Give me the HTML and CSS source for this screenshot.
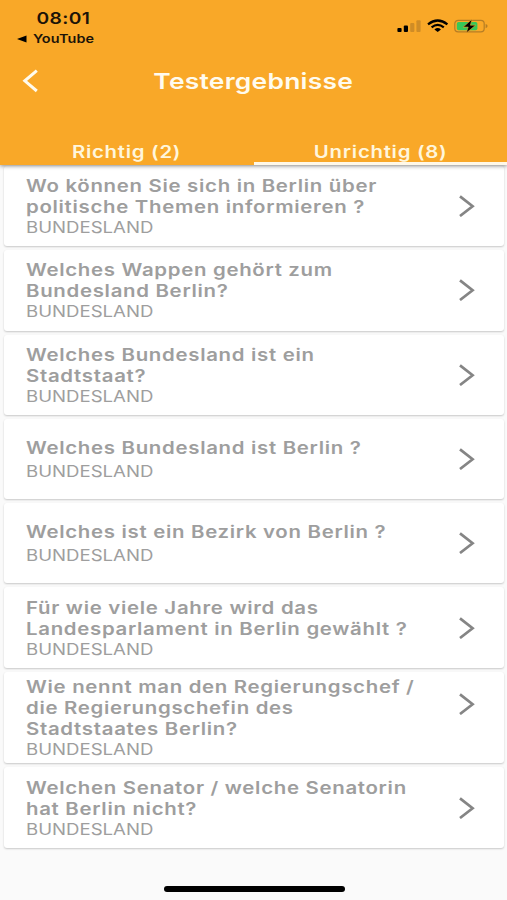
FILE: index.html
```html
<!DOCTYPE html>
<html lang="de">
<head>
<meta charset="utf-8">
<title>Testergebnisse</title>
<link rel="stylesheet" href="styles.css">
</head>
<body>
<header class="header">
	<div class="status">
		<div class="status-left">
			<div class="clock"><span class="wide">08:01</span></div>
			<div class="back-app">
				<svg width="10" height="8" viewBox="0 0 10 8"><path d="M0 4L9.5 .5v7z"/></svg>
				<span class="wide">YouTube</span>
			</div>
		</div>
		<svg class="status-icons" width="92" height="16" viewBox="0 0 92 16">
			<!-- signal -->
			<rect x="0.4" y="9.9" width="4.2" height="4.1" rx="1"/>
			<rect x="6.8" y="7.5" width="4.2" height="6.5" rx="1"/>
			<g fill="#cf8c26">
				<rect x="13.2" y="5" width="4.2" height="9" rx="1"/>
				<rect x="19.4" y="2.2" width="4.2" height="11.8" rx="1"/>
			</g>
			<!-- wifi -->
			<g fill="none" stroke="#000" stroke-width="2.2">
				<path d="M31 6.4Q40.7-1.4 50.4 6.4"/>
				<path d="M34.6 9.3Q40.7 4.4 46.8 9.3"/>
			</g>
			<path d="M37.4 11.4Q40.7 8.8 44 11.4L40.7 14z"/>
			<!-- battery -->
			<rect x="57.8" y="2.3" width="29.4" height="11.6" rx="3.4" fill="none" stroke="#b57d25" stroke-width="1.2"/>
			<path d="M88.6 6q2 .5 2 2.1t-2 2.1z" fill="#b57d25"/>
			<rect x="59.8" y="4" width="20.6" height="8.2" rx="1.8" fill="#35c759"/>
			<path d="M75 1.2L66.2 9.1h5L69.2 15L78.6 7.2h-5.2z" stroke="#f9a828" stroke-width=".6"/>
		</svg>
	</div>
	<div class="title-bar">
		<svg class="back" width="16" height="24" viewBox="0 0 16 24"><path d="M14.8 1.6L2.8 11.8L14.8 22"/></svg>
		<h1><span class="wide">Testergebnisse</span></h1>
	</div>
	<nav class="tabs">
		<a class="tab"><span class="wide">Richtig (2)</span></a>
		<a class="tab active"><span class="wide">Unrichtig (8)</span></a>
	</nav>
</header>

<main class="list">
	<div class="card">
		<div class="text">
			<h2>Wo können Sie sich in Berlin über<br>politische Themen informieren ?</h2>
			<p>BUNDESLAND</p>
		</div>
		<svg class="arrow" width="16" height="22" viewBox="0 0 16 22"><path d="M1 1.4L13.6 11.2L1 21"/></svg>
	</div>
	<div class="card">
		<div class="text">
			<h2>Welches Wappen gehört zum<br>Bundesland Berlin?</h2>
			<p>BUNDESLAND</p>
		</div>
		<svg class="arrow" width="16" height="22" viewBox="0 0 16 22"><path d="M1 1.4L13.6 11.2L1 21"/></svg>
	</div>
	<div class="card">
		<div class="text">
			<h2>Welches Bundesland ist ein<br>Stadtstaat?</h2>
			<p>BUNDESLAND</p>
		</div>
		<svg class="arrow" width="16" height="22" viewBox="0 0 16 22"><path d="M1 1.4L13.6 11.2L1 21"/></svg>
	</div>
	<div class="card single">
		<div class="text">
			<h2>Welches Bundesland ist Berlin ?</h2>
			<p>BUNDESLAND</p>
		</div>
		<svg class="arrow" width="16" height="22" viewBox="0 0 16 22"><path d="M1 1.4L13.6 11.2L1 21"/></svg>
	</div>
	<div class="card single">
		<div class="text">
			<h2>Welches ist ein Bezirk von Berlin ?</h2>
			<p>BUNDESLAND</p>
		</div>
		<svg class="arrow" width="16" height="22" viewBox="0 0 16 22"><path d="M1 1.4L13.6 11.2L1 21"/></svg>
	</div>
	<div class="card">
		<div class="text">
			<h2>Für wie viele Jahre wird das<br>Landesparlament in Berlin gewählt ?</h2>
			<p>BUNDESLAND</p>
		</div>
		<svg class="arrow" width="16" height="22" viewBox="0 0 16 22"><path d="M1 1.4L13.6 11.2L1 21"/></svg>
	</div>
	<div class="card tall">
		<div class="text">
			<h2>Wie nennt man den Regierungschef /<br>die Regierungschefin des<br>Stadtstaates Berlin?</h2>
			<p>BUNDESLAND</p>
		</div>
		<svg class="arrow" width="16" height="22" viewBox="0 0 16 22"><path d="M1 1.4L13.6 11.2L1 21"/></svg>
	</div>
	<div class="card">
		<div class="text">
			<h2>Welchen Senator / welche Senatorin<br>hat Berlin nicht?</h2>
			<p>BUNDESLAND</p>
		</div>
		<svg class="arrow" width="16" height="22" viewBox="0 0 16 22"><path d="M1 1.4L13.6 11.2L1 21"/></svg>
	</div>
</main>

<footer class="home"><div class="home-bar"></div></footer>
</body>
</html>
```
FILE: styles.css
```css
* {
	box-sizing: border-box;
}
body {
	margin: 0;
	height: 900px;
	display: flex;
	flex-direction: column;
	overflow: hidden;
	background: #fafafa;
	font-family: Inter, "Liberation Sans", sans-serif;
}
h1, h2, p {
	margin: 0;
}
svg {
	display: block;
	flex: none;
}
.wide {
	display: inline-block;
	transform: scaleX(1.2);
	white-space: nowrap;
}

/* header */
.header {
	height: 165px;
	flex: none;
	display: flex;
	flex-direction: column;
	background: #f9a828;
	box-shadow: 0 1px 4px rgba(0, 0, 0, .45);
	position: relative;
	z-index: 1;
}
.status {
	height: 54px;
	display: flex;
	justify-content: space-between;
	padding: 8px 18px 0 17px;
	color: #1c1408;
}
.clock {
	font-size: 16px;
	font-weight: 600;
	line-height: 20px;
	letter-spacing: .3px;
	padding-left: 24px;
}
.back-app {
	display: flex;
	align-items: center;
	gap: 11px;
	font-size: 12px;
	font-weight: 600;
	line-height: 21px;
	letter-spacing: .1px;
}
.status-icons {
	margin-top: 10px;
}
.title-bar {
	height: 53px;
	display: flex;
	align-items: center;
	padding-left: 22px;
}
.title-bar h1 {
	flex: 1;
	margin-right: 38px;
	text-align: center;
	font-size: 22px;
	font-weight: 600;
	line-height: 30px;
	letter-spacing: .2px;
	color: #fffbee;
}
.back path {
	fill: none;
	stroke: #fffbee;
	stroke-width: 3;
}
.tabs {
	flex: 1;
	display: flex;
}
.tab {
	flex: 1;
	display: flex;
	justify-content: center;
	align-items: flex-end;
	border-bottom: 3px solid transparent;
	font-size: 17px;
	font-weight: 600;
	line-height: 20px;
	letter-spacing: .6px;
	color: #fff6dc;
}
.active {
	border-bottom-color: #fff8e8;
}

/* results */
.list {
	padding: 1px 3px 0 4px;
}
.card {
	height: 80.3px;
	margin-bottom: 4px;
	padding: 0 29px 0 21.5px;
	display: flex;
	align-items: center;
	justify-content: space-between;
	background: #fff;
	border-radius: 3px;
	box-shadow: 0 1px 2px rgba(0, 0, 0, .2);
}
.text {
	transform: scaleX(1.2);
	transform-origin: 0 50%;
	white-space: nowrap;
	color: #9e9e9e;
}
.text h2 {
	padding-top: 1px;
	font-size: 17px;
	font-weight: 600;
	line-height: 21px;
	letter-spacing: .58px;
}
.text p {
	font-size: 15.5px;
	line-height: 19px;
}
.single .text p {
	padding-top: 3px;
}
.tall {
	height: 91.7px;
}
.tall .arrow {
	margin-bottom: 28px;
}
.arrow path {
	fill: none;
	stroke: #858585;
	stroke-width: 2.7;
}

.home {
	flex: 1;
	display: flex;
	justify-content: center;
	align-items: flex-end;
	padding: 0 0 8px 1px;
}
.home-bar {
	width: 181px;
	height: 6px;
	border-radius: 3px;
	background: #000;
}
```
